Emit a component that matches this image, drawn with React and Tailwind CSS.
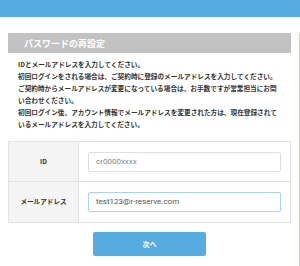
import React from 'react';

const jp = "font-['Noto_Sans_CJK_JP','Noto_Sans',sans-serif]";

function App() {
  return (
    <div className={`w-[300px] h-[266px] bg-white overflow-hidden ${jp}`}>
      {/* ヘッダー */}
      <div className="h-[17px] bg-[#56abdf]" />

      <div className="w-[300px] h-[249px] border-r border-[#c9e0a2]">
        {/* タイトル */}
        <div className="mx-[8px] mt-[16px] h-[20px] bg-[#c2c2c2] flex items-center pl-[16px]">
          <h2 className="text-[9px] font-bold text-white leading-none">パスワードの再設定</h2>
        </div>

        {/* 説明文 */}
        <div className="px-[18px] mt-[5px] text-[6.65px] leading-[12px] text-[#333] font-semibold">
          <p>IDとメールアドレスを入力してください。</p>
          <p>初回ログインをされる場合は、ご契約時に登録のメールアドレスを入力してください。</p>
          <p>ご契約時からメールアドレスが変更になっている場合は、お手数ですが営業担当にお問い合わせください。</p>
          <p>初回ログイン後、アカウント情報でメールアドレスを変更された方は、現在登録されているメールアドレスを入力してください。</p>
        </div>

        {/* 入力テーブル */}
        <div className="mx-[8px] mt-[11px] border border-[#e3e3e3]">
          <div className="flex h-[40px] border-b border-[#e3e3e3]">
            <div className="w-[70px] bg-[#f4f4f4] border-r border-[#e3e3e3] flex items-center justify-center text-[6.6px] font-bold text-[#333]">
              ID
            </div>
            <div className="flex-1 flex items-center px-[9px]">
              <div className="w-full h-[20px] border border-[#dedede] rounded-[2px] flex items-center px-[7px] text-[8px] text-[#888] font-['Roboto',sans-serif]">
                cr0000xxxx
              </div>
            </div>
          </div>
          <div className="flex h-[40px]">
            <div className="w-[70px] bg-[#f4f4f4] border-r border-[#e3e3e3] flex items-center justify-center text-[6.6px] font-bold text-[#333]">
              メールアドレス
            </div>
            <div className="flex-1 flex items-center px-[9px]">
              <div className="w-full h-[20px] border border-[#a9d3f1] rounded-[2px] flex items-center px-[7px] text-[8px] text-[#555] font-['Roboto',sans-serif]">
                test123@r-reserve.com
              </div>
            </div>
          </div>
        </div>

        {/* 次へボタン */}
        <div className="flex justify-center mt-[9px]">
          <button className="w-[113px] h-[24px] bg-[#56abdf] rounded-[2px] text-white text-[7px] font-bold">
            次へ
          </button>
        </div>
      </div>
    </div>
  );
}

export default App;
